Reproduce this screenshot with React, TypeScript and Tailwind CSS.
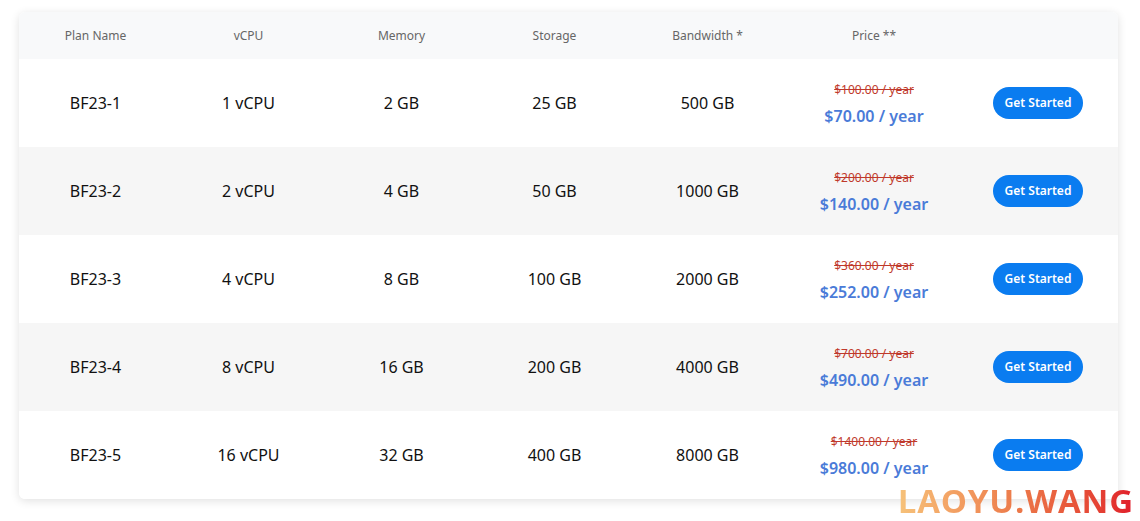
const plans = [
  { name: "BF23-1", cpu: "1 vCPU", mem: "2 GB", disk: "25 GB", bw: "500 GB", old: "$100.00 / year", price: "$70.00 / year" },
  { name: "BF23-2", cpu: "2 vCPU", mem: "4 GB", disk: "50 GB", bw: "1000 GB", old: "$200.00 / year", price: "$140.00 / year" },
  { name: "BF23-3", cpu: "4 vCPU", mem: "8 GB", disk: "100 GB", bw: "2000 GB", old: "$360.00 / year", price: "$252.00 / year" },
  { name: "BF23-4", cpu: "8 vCPU", mem: "16 GB", disk: "200 GB", bw: "4000 GB", old: "$700.00 / year", price: "$490.00 / year" },
  { name: "BF23-5", cpu: "16 vCPU", mem: "32 GB", disk: "400 GB", bw: "8000 GB", old: "$1400.00 / year", price: "$980.00 / year" },
];

const cols = "grid grid-cols-[153px_153px_153px_153px_153px_180px_1fr] items-center text-center";

export default function App() {
  return (
    <div className="relative h-[521px] w-[1140px] overflow-hidden bg-white pl-[19px] pt-[12px]" style={{ fontFamily: '"Noto Sans", "Open Sans", sans-serif' }}>
      <div className="w-[1099px] overflow-hidden rounded-md bg-white shadow-[0_2px_10px_rgba(0,0,0,0.12)]">
        <div className={`${cols} h-[47px] bg-[#f8f9fa] text-[12px] text-[#666]`}>
          <div>Plan Name</div>
          <div>vCPU</div>
          <div>Memory</div>
          <div>Storage</div>
          <div>Bandwidth *</div>
          <div>Price **</div>
          <div />
        </div>
        {plans.map((p, i) => (
          <div key={p.name} className={`${cols} h-[88px] text-[16px] text-[#111] ${i % 2 ? "bg-[#f6f6f6]" : "bg-white"}`}>
            <div>{p.name}</div>
            <div>{p.cpu}</div>
            <div>{p.mem}</div>
            <div>{p.disk}</div>
            <div>{p.bw}</div>
            <div className="flex flex-col items-center pt-[4px]">
              <span className="text-[12px] leading-4 text-[#c0392b] line-through">{p.old}</span>
              <span className="mt-[6px] text-[16px] font-semibold text-[#4a7bd8]">{p.price}</span>
            </div>
            <div className="-ml-[6px] flex justify-center">
              <button className="h-[32px] rounded-full bg-[#0a7cf0] px-3 text-[12px] font-semibold text-white">Get Started</button>
            </div>
          </div>
        ))}
      </div>
      <div
        className="absolute bottom-[-4px] right-[6px] bg-gradient-to-r from-[#f6c27a] via-[#ec7a4a] to-[#e0192a] bg-clip-text text-[33px] font-bold tracking-wide text-transparent"
        style={{ fontFamily: '"Open Sans", sans-serif' }}
      >
        LAOYU.WANG
      </div>
    </div>
  );
}
